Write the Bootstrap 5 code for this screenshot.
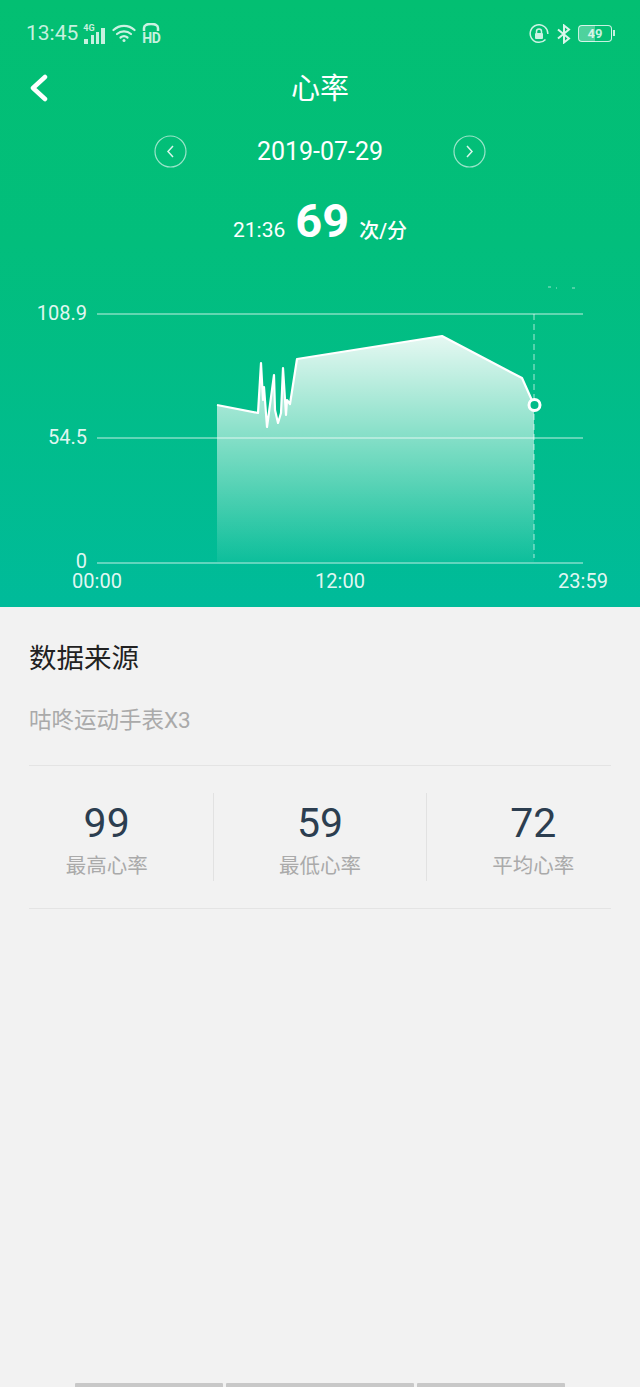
<!doctype html>
<html lang="zh"><head><meta charset="utf-8"><title>心率</title>
<link href="https://cdn.jsdelivr.net/npm/bootstrap@5.3.0/dist/css/bootstrap.min.css" rel="stylesheet">
<style>
html,body{height:1387px;overflow:hidden}
body{background:#f2f2f2;font-family:Roboto,"Noto Sans CJK SC",sans-serif}
.hero{height:607px;background:linear-gradient(180deg,#03bf72 0%,#02be7c 40%,#00bb9a 100%);color:#fff}
.statusbar{height:66px;padding:1px 28px 0 26px;color:rgba(255,255,255,.78)}
.clock{font-size:21px;line-height:1;margin-right:5px}
.mininet{position:relative;width:24px;height:20px;margin-top:1px}
.fourg{position:absolute;left:0;top:0;font-size:9px;font-weight:700;line-height:1}
.hdmark{font-size:14px;font-weight:700;line-height:1;letter-spacing:-.5px}
.hdwrap{width:20px;margin-left:5px;margin-top:0}
.wifiicon{margin-left:5px}
.batt{width:34px;height:17px;border:1.5px solid rgba(255,255,255,.78);border-radius:4px;font-size:13px;font-weight:700;line-height:1;position:relative;margin-left:7px;background:linear-gradient(90deg,rgba(255,255,255,.3) 49%,transparent 49%)}
.batt::after{content:"";position:absolute;right:-4px;top:4px;width:2px;height:6px;background:rgba(255,255,255,.78)}
.navline{height:44px;position:relative;font-size:29px;line-height:46px}
.backbtn{position:absolute;left:29px;top:8px;width:20px;height:28px}
.dateline{height:38px;margin-top:22px;gap:69px}
.datetext{font-size:25px;line-height:1;width:128px;text-align:center;white-space:nowrap}
.roundbtn{width:33px;height:33px}
.readline{height:56px;margin-top:28px;font-size:21px;line-height:1;gap:10px}
.bignum{font-size:47px;font-weight:700;line-height:1;margin:-12px 0 0}
.unitlabel{margin-top:9px}
.unitcjk{font-size:20px;font-weight:500;margin-top:9px}
.chartsvg{display:block;margin-top:26px}
.chartsvg text{font-family:Roboto,sans-serif;font-size:20px;fill:rgba(255,255,255,.9)}
.sourcehead{font-size:27.5px;line-height:1;color:#222;padding:38px 29px 0}
.sourcename{font-size:22.5px;line-height:1;color:#aaa;padding:36px 29px 0;height:92px}
.thinrule{height:1px;background:#e4e4e4;margin:0 29px}
.statrow{padding:27px 0}
.statcell{height:88px}
.statmid{border-left:1px solid #e2e2e2;border-right:1px solid #e2e2e2}
.statnum{font-size:41px;line-height:1;color:#2c3e50;margin-top:10px}
.statlabel{font-size:20.5px;line-height:1;color:#aaa;margin-top:12px}
.softkeys{position:fixed;left:0;right:0;bottom:0;height:4px;gap:3px}
.softkeys span{background:#c8c8c8;height:4px;border-radius:1px 1px 0 0}
.sk1{width:148px}.sk2{width:188px}.sk3{width:148px}
</style></head>
<body>
<div class="hero">
  <div class="statusbar d-flex align-items-center">
    <span class="clock">13:45</span>
    <div class="mininet">
      <span class="fourg">4G</span>
      <svg width="24" height="20" viewBox="0 0 24 20"><g fill="rgba(255,255,255,.78)"><rect x="1" y="12" width="4" height="5"/><rect x="8" y="8" width="3" height="9"/><rect x="13" y="5" width="3" height="12"/><rect x="18" y="1" width="4" height="16"/></g></svg>
    </div>
    <svg class="wifiicon" width="24" height="20" viewBox="0 0 24 20" fill="none" stroke="rgba(255,255,255,.8)" stroke-width="2.200" stroke-linecap="round"><path d="M1.500 6C7.500 .5 16.500 .5 22.500 6"/><path d="M5 10C9 6.500 15 6.500 19 10"/><path d="M8.500 13.500C10.500 12 13.500 12 15.500 13.500"/><circle cx="12" cy="16.500" r="1.500" fill="rgba(255,255,255,.8)" stroke="none"/></svg>
    <div class="hdwrap d-flex flex-column align-items-center">
      <svg width="18" height="8" viewBox="0 0 18 8" fill="none" stroke="rgba(255,255,255,.8)" stroke-width="2.500"><path d="M2 8V5C2 -0.500 16 -0.500 16 5V8"/></svg>
      <span class="hdmark">HD</span>
    </div>
    <div class="ms-auto d-flex align-items-center">
      <svg width="20" height="20" viewBox="0 0 20 20" fill="none" stroke="rgba(255,255,255,.8)" stroke-width="1.500"><path d="M16.500 15.500A8.800 8.800 0 1 1 18.800 10"/><rect x="6" y="9" width="8" height="6" rx="1" fill="rgba(255,255,255,.8)" stroke="none"/><path d="M7.500 9V7.500a2.500 2.500 0 0 1 5 0V9"/></svg>
      <svg class="ms-2" width="14" height="20" viewBox="0 0 14 20" fill="none" stroke="rgba(255,255,255,.85)" stroke-width="2"><path d="M1 5.500L12 14.500L7 18.500V1.500L12 5.500L1 14.500"/></svg>
      <div class="batt d-flex align-items-center justify-content-center">49</div>
    </div>
  </div>
  <div class="navline text-center">
    <svg class="backbtn" viewBox="0 0 20 28" fill="none" stroke="#fff" stroke-width="4.500" stroke-linecap="round" stroke-linejoin="round"><path d="M16 3L4 14L16 25"/></svg>
    心率
  </div>
  <div class="dateline d-flex align-items-center justify-content-center">
    <svg class="roundbtn" viewBox="0 0 33 33" fill="none" stroke="rgba(255,255,255,.6)"><circle cx="16.500" cy="16.500" r="15.500" stroke-width="1.200"/><path d="M19 11L14 16.500L19 22" stroke-width="1.500" stroke="rgba(255,255,255,.85)"/></svg>
    <span class="datetext">2019-07-29</span>
    <svg class="roundbtn" viewBox="0 0 33 33" fill="none" stroke="rgba(255,255,255,.6)"><circle cx="16.500" cy="16.500" r="15.500" stroke-width="1.200"/><path d="M14 11L19 16.500L14 22" stroke-width="1.500" stroke="rgba(255,255,255,.85)"/></svg>
  </div>
  <div class="readline d-flex align-items-center justify-content-center">
    <span class="unitlabel">21:36</span><span class="bignum">69</span><span class="unitcjk">次/分</span>
  </div>
  <svg class="chartsvg" width="640" height="327" viewBox="0 280 640 327" fill="none">
    <defs><linearGradient id="areafill" x1="0" y1="336" x2="0" y2="562" gradientUnits="userSpaceOnUse"><stop offset="0" stop-color="#fff" stop-opacity=".9"/><stop offset="1" stop-color="#fff" stop-opacity=".05"/></linearGradient></defs>
    <path d="M548 287h3M556 288h1M572 288h3" stroke="rgba(255,255,255,.6)" stroke-width="1"/>
    <path d="M217 405L258 413L261 363L263 400L264 387L267 427L274 375L275 410L278 423L281 413L283 368L286 415L287 400L290 404L297 359L442 336L522 378L534 405V562H217Z" fill="url(#areafill)"/>
    <path d="M97 314H583M97 438H583M97 563H583" stroke="rgba(255,255,255,.38)" stroke-width="2"/>
    <path d="M534 314V558" stroke="rgba(255,255,255,.65)" stroke-width="1" stroke-dasharray="6 4"/>
    <path d="M217 405L258 413L261 363L263 400L264 387L267 427L274 375L275 410L278 423L281 413L283 368L286 415L287 400L290 404L297 359L442 336L522 378L534 405" stroke="#fff" stroke-width="2.200" stroke-linejoin="round"/>
    <circle cx="534.500" cy="405" r="5.500" fill="#02bb88" stroke="#fff" stroke-width="3"/>
    <text x="87" y="320" text-anchor="end">108.9</text>
    <text x="87" y="444" text-anchor="end">54.5</text>
    <text x="87" y="568" text-anchor="end">0</text>
    <text x="97" y="588" text-anchor="middle">00:00</text>
    <text x="340" y="588" text-anchor="middle">12:00</text>
    <text x="583" y="588" text-anchor="middle">23:59</text>
  </svg>
</div>
<div class="sheet-body">
  <div class="sourcehead">数据来源</div>
  <div class="sourcename">咕咚运动手表X3</div>
  <div class="thinrule"></div>
  <div class="row g-0 statrow text-center">
    <div class="col-4 statcell"><div class="statnum">99</div><div class="statlabel">最高心率</div></div>
    <div class="col-4 statcell statmid"><div class="statnum">59</div><div class="statlabel">最低心率</div></div>
    <div class="col-4 statcell"><div class="statnum">72</div><div class="statlabel">平均心率</div></div>
  </div>
  <div class="thinrule"></div>
</div>
<div class="softkeys d-flex justify-content-center"><span class="sk1"></span><span class="sk2"></span><span class="sk3"></span></div>
<script src="https://cdn.jsdelivr.net/npm/bootstrap@5.3.0/dist/js/bootstrap.bundle.min.js"></script>
</body></html>
